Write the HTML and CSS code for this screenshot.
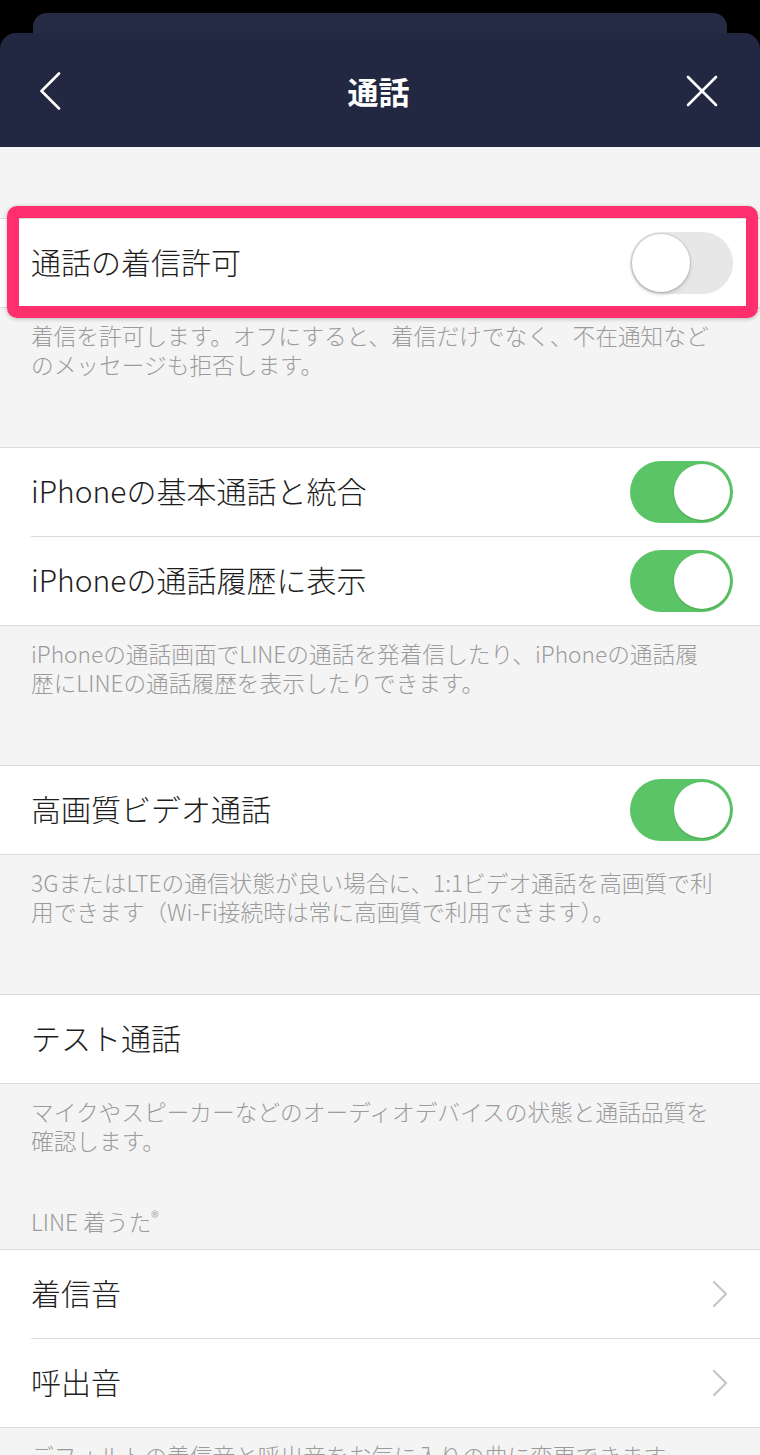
FILE: index.html
```html
<!DOCTYPE html>
<html lang="ja">
<head>
    <meta charset="UTF-8">
    <meta name="viewport" content="width=device-width, initial-scale=1.0">
    <title>通話</title>
    <link rel="stylesheet" href="styles.css">
</head>
<body>
    <!-- foglio dietro (modale impilata) -->
    <div class="backsheet"></div>

    <header class="navbar">
        <span class="nav-icon">
            <svg width="22" height="38" viewBox="0 0 22 38"><path d="M20 1.5 L2.5 19 L20 36.5" fill="none" stroke="#fff" stroke-width="2.6" stroke-linecap="round" stroke-linejoin="round"/></svg>
        </span>
        <h1 class="nav-title">通話</h1>
        <span class="nav-icon nav-close">
            <svg width="32" height="32" viewBox="0 0 32 32"><path d="M2 2 L30 30 M30 2 L2 30" fill="none" stroke="#fff" stroke-width="2.6" stroke-linecap="round"/></svg>
        </span>
    </header>

    <main class="content">
        <section class="group highlighted">
            <div class="row">
                <div class="row-inner">
                    <span class="row-label">通話の着信許可</span>
                    <span class="switch"><span class="knob"></span></span>
                </div>
            </div>
            <div class="marker"></div>
        </section>
        <p class="desc">着信を許可します。オフにすると、着信だけでなく、不在通知など<br>のメッセージも拒否します。</p>

        <section class="group">
            <div class="row">
                <div class="row-inner">
                    <span class="row-label">iPhoneの基本通話と統合</span>
                    <span class="switch on"><span class="knob"></span></span>
                </div>
            </div>
            <div class="row">
                <div class="row-inner">
                    <span class="row-label">iPhoneの通話履歴に表示</span>
                    <span class="switch on"><span class="knob"></span></span>
                </div>
            </div>
        </section>
        <p class="desc">iPhoneの通話画面でLINEの通話を発着信したり、iPhoneの通話履<br>歴にLINEの通話履歴を表示したりできます。</p>

        <section class="group">
            <div class="row">
                <div class="row-inner">
                    <span class="row-label">高画質ビデオ通話</span>
                    <span class="switch on"><span class="knob"></span></span>
                </div>
            </div>
        </section>
        <p class="desc">3GまたはLTEの通信状態が良い場合に、1:1ビデオ通話を高画質で利<br>用できます（Wi-Fi接続時は常に高画質で利用できます）。</p>

        <section class="group">
            <div class="row">
                <div class="row-inner">
                    <span class="row-label">テスト通話</span>
                </div>
            </div>
        </section>
        <p class="desc desc-tight">マイクやスピーカーなどのオーディオデバイスの状態と通話品質を<br>確認します。</p>

        <h2 class="section-label">LINE 着うた<sup>®</sup></h2>
        <section class="group">
            <div class="row">
                <div class="row-inner">
                    <span class="row-label">着信音</span>
                    <svg class="chevron" width="16" height="28" viewBox="0 0 16 28"><path d="M2 2 L14 14 L2 26" fill="none" stroke="#c7c7cc" stroke-width="2.4" stroke-linecap="round" stroke-linejoin="round"/></svg>
                </div>
            </div>
            <div class="row">
                <div class="row-inner">
                    <span class="row-label">呼出音</span>
                    <svg class="chevron" width="16" height="28" viewBox="0 0 16 28"><path d="M2 2 L14 14 L2 26" fill="none" stroke="#c7c7cc" stroke-width="2.4" stroke-linecap="round" stroke-linejoin="round"/></svg>
                </div>
            </div>
        </section>
        <p class="desc">デフォルトの着信音と呼出音をお気に入りの曲に変更できます。</p>
    </main>
</body>
</html>
```

FILE: styles.css
```css
body {
    margin: 0;
    background-color: #000;
    font-family: "Noto Sans CJK JP", "Noto Sans", sans-serif;
    overflow: hidden;
}
.backsheet {
    height: 20px;
    margin: 13px 33px 0 33px;
    background-color: #252b45;
    border-radius: 14px 14px 0 0;
}
.navbar {
    height: 114px;
    background-color: #222841;
    border-radius: 16px 16px 0 0;
    display: grid;
    grid-template-columns: 1fr auto 1fr;
    align-items: center;
    padding: 0 42px 0 39px;
}
.nav-icon {
    display: flex;
    align-items: center;
    padding-top: 2px;
}
.nav-close {
    justify-content: flex-end;
}
.nav-title {
    margin: 0;
    color: #fff;
    font-size: 31px;
    font-weight: bold;
    line-height: 1;
}
.content {
    background-color: #f4f4f4;
    padding-top: 71px;
    min-height: 1300px;
}
.group {
    background-color: #fff;
    border-top: 1px solid #dcdcdc;
    border-bottom: 1px solid #dcdcdc;
}
.highlighted {
    position: relative;
}
/* cornice rosa sopra la riga */
.marker {
    position: absolute;
    top: -13px;
    left: 7px;
    right: 2px;
    bottom: -11px;
    border: 12px solid #ff2e6c;
    border-radius: 10px;
    box-shadow: 0 1px 4px rgba(0, 0, 0, 0.25);
    pointer-events: none;
}
.row {
    padding-left: 31px;
}
.row + .row .row-inner {
    border-top: 1px solid #dcdcdc;
}
.row-inner {
    height: 88px;
    display: flex;
    align-items: center;
    justify-content: space-between;
    padding-right: 27px;
}
.row-label {
    font-size: 30px;
    font-weight: 300;
    color: #1e1e1e;
    line-height: 1;
    margin-bottom: 4px;
}
.chevron {
    margin-right: 5px;
}
.switch {
    width: 103px;
    height: 62px;
    border-radius: 31px;
    background-color: #e7e7e7;
    box-sizing: border-box;
    display: flex;
    align-items: center;
    padding: 2px;
}
.switch .knob {
    width: 58px;
    height: 58px;
    border-radius: 50%;
    background-color: #fff;
    box-shadow: 0 2px 4px rgba(0, 0, 0, 0.2), 0 0 0 1px rgba(0, 0, 0, 0.08);
}
.switch.on {
    background-color: #5bc466;
    justify-content: flex-end;
    padding: 3px;
}
.switch.on .knob {
    width: 56px;
    height: 56px;
    box-shadow: 0 1px 2px rgba(0, 80, 0, 0.25);
}
.desc {
    margin: 0;
    padding: 13px 20px 68px 31px;
    font-size: 22.7px;
    font-weight: 300;
    line-height: 29px;
    color: #9b9b9b;
}
.desc-tight {
    padding-bottom: 0;
}
.section-label {
    margin: 0;
    padding: 52px 31px 13px 31px;
    font-size: 22.7px;
    line-height: 29px;
    font-weight: 300;
    color: #9b9b9b;
}
.section-label sup {
    font-size: 16px;
    vertical-align: 8px;
    line-height: 0;
}
```
